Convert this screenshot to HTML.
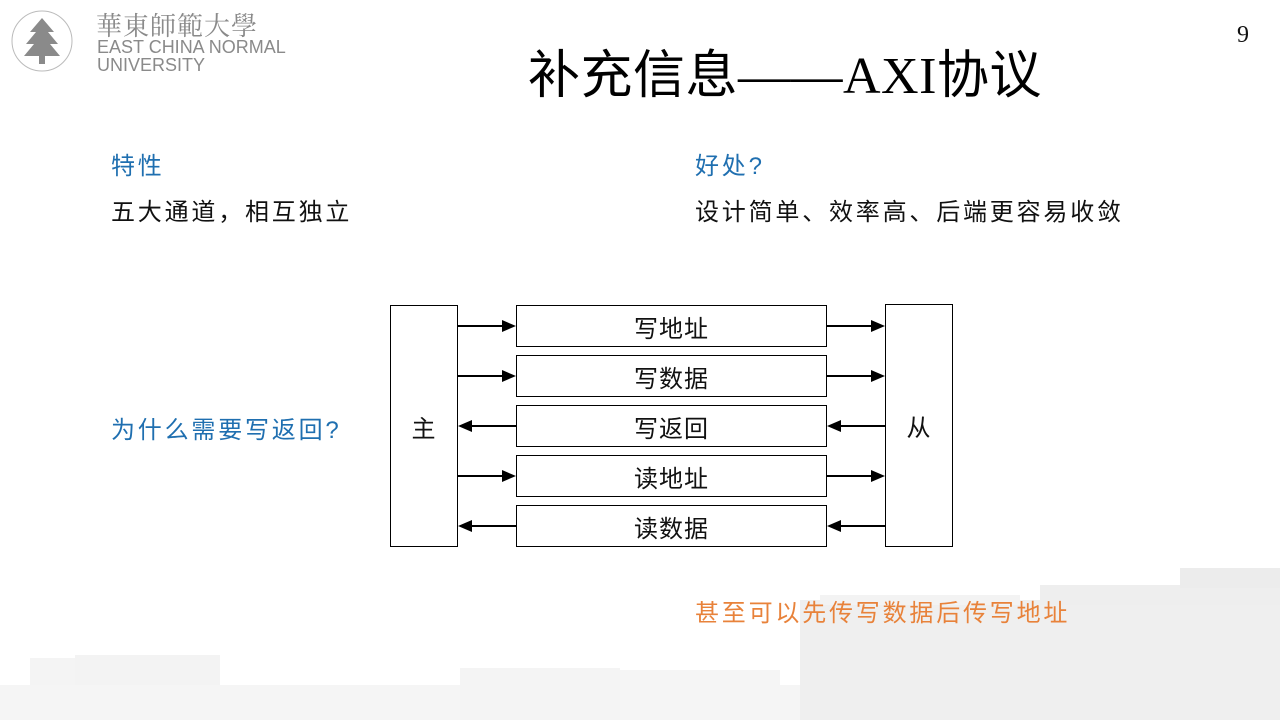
<!DOCTYPE html>
<html><head><meta charset="utf-8"><style>
body{margin:0;width:1280px;height:720px;overflow:hidden;background:#fff;position:relative;font-family:"Liberation Sans","Noto Sans CJK SC",sans-serif}
.a{position:absolute;white-space:nowrap}
.t{font-size:24px;letter-spacing:2.8px}
.box{position:absolute;border:1px solid #000;background:#fff;box-sizing:border-box;display:flex;align-items:center;justify-content:center;font-size:24px;color:#111;letter-spacing:1px}
.bg{position:absolute;background:#f1f1f1}
</style></head><body>
<!-- background buildings -->
<div class="bg" style="left:800px;top:600px;width:480px;height:120px;background:#efefef"></div>
<div class="bg" style="left:1040px;top:585px;width:240px;height:20px;background:#eeeeee"></div>
<div class="bg" style="left:1180px;top:568px;width:100px;height:20px;background:#ececec"></div>
<div class="bg" style="left:820px;top:595px;width:200px;height:10px;background:#f3f3f3"></div>
<div class="bg" style="left:30px;top:658px;width:60px;height:62px;background:#f4f4f4"></div>
<div class="bg" style="left:75px;top:655px;width:145px;height:65px;background:#f3f3f3"></div>
<div class="bg" style="left:0;top:685px;width:800px;height:35px;background:#f5f5f5"></div>
<div class="bg" style="left:460px;top:668px;width:160px;height:52px;background:#f4f4f4"></div>
<div class="bg" style="left:620px;top:670px;width:160px;height:50px;background:#f5f5f5"></div>

<!-- logo -->
<svg class="a" style="left:8px;top:6px" width="80" height="70" viewBox="0 0 80 70">
<circle cx="34" cy="35" r="30" fill="none" stroke="#bbb" stroke-width="1"/>
<path d="M34 12 L46 26 L40 26 L50 38 L42 38 L52 50 L16 50 L26 38 L18 38 L28 26 L22 26Z" fill="#8a8a8a"/>
<rect x="31" y="50" width="6" height="8" fill="#8a8a8a"/>
</svg>
<div class="a" style="left:96px;top:6px;font-size:26px;color:#8a8a8a;font-family:'Noto Serif CJK SC',serif;letter-spacing:1px">華東師範大學</div>
<div class="a" style="left:97px;top:38px;font-size:18px;color:#8a8a8a;line-height:18px">EAST CHINA NORMAL<br>UNIVERSITY</div>

<div class="a" style="left:1237px;top:22px;font-size:24px;font-family:'Liberation Serif',serif;color:#111">9</div>
<div class="a" style="left:528px;top:33px;font-size:52px;letter-spacing:0.5px;color:#000;font-family:'Liberation Serif','Noto Sans CJK SC',serif">补充信息——AXI协议</div>

<div class="a t" style="left:111px;top:146px;color:#1f6fb0">特性</div>
<div class="a t" style="left:111px;top:192px;color:#111">五大通道，相互独立</div>
<div class="a t" style="left:695px;top:146px;color:#1f6fb0">好处?</div>
<div class="a t" style="left:695px;top:192px;color:#111">设计简单、效率高、后端更容易收敛</div>
<div class="a t" style="left:111px;top:410px;color:#1f6fb0">为什么需要写返回?</div>
<div class="a t" style="left:695px;top:593px;color:#e8823a">甚至可以先传写数据后传写地址</div>

<div class="box" style="left:390px;top:305px;width:68px;height:242px">主</div>
<div class="box" style="left:885px;top:304px;width:68px;height:243px">从</div>
<div class="box" style="left:516px;top:305px;width:311px;height:42px">写地址</div>
<div class="box" style="left:516px;top:355px;width:311px;height:42px">写数据</div>
<div class="box" style="left:516px;top:405px;width:311px;height:42px">写返回</div>
<div class="box" style="left:516px;top:455px;width:311px;height:42px">读地址</div>
<div class="box" style="left:516px;top:505px;width:311px;height:42px">读数据</div>
<svg class="a" style="left:0;top:0" width="1280" height="720">
<g stroke="#000" stroke-width="2" fill="#000">
<line x1="458" y1="326" x2="504" y2="326"/><polygon points="502,320 516,326 502,332" stroke="none"/>
<line x1="827" y1="326" x2="873" y2="326"/><polygon points="871,320 885,326 871,332" stroke="none"/>
<line x1="458" y1="376" x2="504" y2="376"/><polygon points="502,370 516,376 502,382" stroke="none"/>
<line x1="827" y1="376" x2="873" y2="376"/><polygon points="871,370 885,376 871,382" stroke="none"/>
<line x1="470" y1="426" x2="516" y2="426"/><polygon points="472,420 458,426 472,432" stroke="none"/>
<line x1="839" y1="426" x2="885" y2="426"/><polygon points="841,420 827,426 841,432" stroke="none"/>
<line x1="458" y1="476" x2="504" y2="476"/><polygon points="502,470 516,476 502,482" stroke="none"/>
<line x1="827" y1="476" x2="873" y2="476"/><polygon points="871,470 885,476 871,482" stroke="none"/>
<line x1="470" y1="526" x2="516" y2="526"/><polygon points="472,520 458,526 472,532" stroke="none"/>
<line x1="839" y1="526" x2="885" y2="526"/><polygon points="841,520 827,526 841,532" stroke="none"/>
</g></svg>
</body></html>
